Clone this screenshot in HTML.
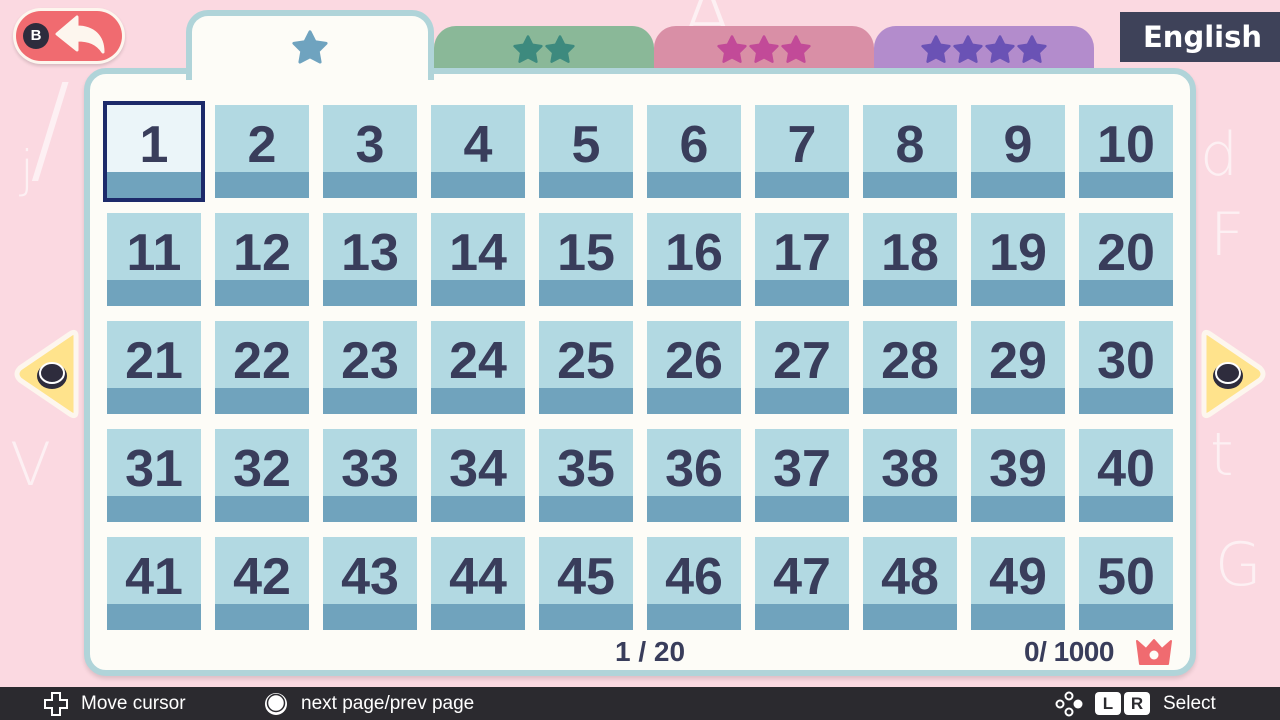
<!DOCTYPE html>
<html><head><meta charset="utf-8"><style>
*{margin:0;padding:0;box-sizing:border-box}
body{width:1280px;height:720px;overflow:hidden;background:#fbd9e1;position:relative;font-family:"Liberation Sans",sans-serif}
.abs{position:absolute}
.bgl{position:absolute;color:rgba(255,255,255,.6);font-family:"DejaVu Sans",sans-serif;font-weight:200}
.panel{left:84px;top:68px;width:1112px;height:608px;background:#fdfcf7;border:6px solid #b0d4d9;border-radius:22px;box-shadow:0 3px 4px rgba(0,0,0,.12)}
.tab{height:60px;border-radius:22px 22px 0 0;display:flex;justify-content:center;align-items:center;gap:2px}
.grid{left:107px;top:105px;display:grid;grid-template-columns:repeat(10,94px);grid-auto-rows:93px;column-gap:14px;row-gap:15px}
.c{background:#b2d9e2;position:relative;border-bottom:26px solid #70a3bd;color:#393d5b;font-weight:bold;font-size:52px;text-align:center;line-height:80px;letter-spacing:0;overflow:hidden}
.sel{background:#ebf5f9;box-shadow:0 0 0 4px #1d2a6a}
.bar{left:0;top:687px;width:1280px;height:33px;background:#2b2a2f;color:#fff;font-size:19px}
</style></head><body>
<div class="bgl" style="left:30px;top:60px;font-size:120px">/</div>
<div class="bgl" style="left:1200px;top:120px;font-size:60px">d</div>
<div class="bgl" style="left:1210px;top:200px;font-size:60px">F</div>
<div class="bgl" style="left:1215px;top:530px;font-size:60px">G</div>
<div class="bgl" style="left:20px;top:140px;font-size:50px">j</div>
<div class="bgl" style="left:10px;top:430px;font-size:60px">V</div>
<div class="bgl" style="left:1210px;top:420px;font-size:60px">t</div>
<div class="bgl" style="left:680px;top:-30px;font-size:80px">A</div>

<svg width="0" height="0" style="position:absolute"><defs><path id="s" d="M15 1.5l4.2 8.3 9.2 1.3-6.6 6.5 1.6 9.1-8.4-4.4-8.4 4.4 1.6-9.1-6.6-6.5 9.2-1.3z" stroke-width="2.5" stroke-linejoin="round"/></defs></svg>

<div class="abs" style="left:13px;top:8px;width:112px;height:56px;border-radius:28px;background:#fdf6ee;box-shadow:0 2px 3px rgba(0,0,0,.15)"></div>
<div class="abs" style="left:16px;top:11px;width:106px;height:50px;border-radius:25px;background:#f06b70"></div>
<div class="abs" style="left:23px;top:23px;width:26px;height:26px;border-radius:50%;background:#2e2c3d;color:#fff;font-size:15px;font-weight:bold;text-align:center;line-height:26px">B</div>
<svg class="abs" style="left:55px;top:14px" width="52" height="40" viewBox="0 0 52 40"><path d="M2 20 L22 3 L22 13 C38 13 48 22 48 38 C42 29 34 26 22 26 L22 36 Z" fill="#fdf6ee" stroke="#fdf6ee" stroke-width="3" stroke-linejoin="round"/></svg>

<div class="abs tab" style="left:434px;top:26px;width:220px;background:#8ab898;height:48px"><svg width="64" height="30" viewBox="0 0 64 30"><g fill="#3d8a7e" stroke="#3d8a7e"><use href="#s" x="1"/><use href="#s" x="33"/></g></svg></div>
<div class="abs tab" style="left:654px;top:26px;width:220px;background:#d98fa6;height:48px"><svg width="96" height="30" viewBox="0 0 96 30"><g fill="#c24a98" stroke="#c24a98"><use href="#s" x="1"/><use href="#s" x="33"/><use href="#s" x="65"/></g></svg></div>
<div class="abs tab" style="left:874px;top:26px;width:220px;background:#b38ccc;height:48px"><svg width="128" height="30" viewBox="0 0 128 30"><g fill="#6a52b5" stroke="#6a52b5"><use href="#s" x="1"/><use href="#s" x="33"/><use href="#s" x="65"/><use href="#s" x="97"/></g></svg></div>

<div class="abs panel"></div>
<div class="abs" style="left:186px;top:10px;width:248px;height:70px;background:#fdfcf7;border:6px solid #b0d4d9;border-bottom:none;border-radius:22px 22px 0 0"></div>
<div class="abs" style="left:192px;top:68px;width:236px;height:12px;background:#fdfcf7"></div>
<svg class="abs" style="left:292px;top:30px" width="36" height="36" viewBox="0 0 30 30"><g fill="#6fa3bf" stroke="#6fa3bf"><use href="#s"/></g></svg>

<div class="abs" style="left:1120px;top:12px;width:160px;height:50px;background:#3e4259;color:#fff;font-size:29px;font-weight:bold;line-height:50px;padding-left:23px;font-family:'DejaVu Sans',sans-serif">English</div>

<div class="abs grid">
<div class="c sel">1</div><div class="c">2</div><div class="c">3</div><div class="c">4</div><div class="c">5</div><div class="c">6</div><div class="c">7</div><div class="c">8</div><div class="c">9</div><div class="c">10</div>
<div class="c">11</div><div class="c">12</div><div class="c">13</div><div class="c">14</div><div class="c">15</div><div class="c">16</div><div class="c">17</div><div class="c">18</div><div class="c">19</div><div class="c">20</div>
<div class="c">21</div><div class="c">22</div><div class="c">23</div><div class="c">24</div><div class="c">25</div><div class="c">26</div><div class="c">27</div><div class="c">28</div><div class="c">29</div><div class="c">30</div>
<div class="c">31</div><div class="c">32</div><div class="c">33</div><div class="c">34</div><div class="c">35</div><div class="c">36</div><div class="c">37</div><div class="c">38</div><div class="c">39</div><div class="c">40</div>
<div class="c">41</div><div class="c">42</div><div class="c">43</div><div class="c">44</div><div class="c">45</div><div class="c">46</div><div class="c">47</div><div class="c">48</div><div class="c">49</div><div class="c">50</div>
</div>

<div class="abs" style="left:590px;top:636px;width:120px;text-align:center;font-size:28px;font-weight:bold;color:#393d5b">1 / 20</div>
<div class="abs" style="left:1024px;top:636px;font-size:28px;font-weight:bold;color:#393d5b;letter-spacing:-0.5px">0/ 1000</div>
<svg class="abs" style="left:1135px;top:638px" width="38" height="28" viewBox="0 0 38 28"><path d="M2 3 L11 11 L19 2 L27 11 L36 3 L33 26 L5 26 Z" fill="#f06b70" stroke="#f06b70" stroke-width="2" stroke-linejoin="round"/><circle cx="19" cy="17" r="4.5" fill="#fdfcf7"/></svg>

<svg class="abs" style="left:12px;top:328px" width="70" height="92" viewBox="0 0 70 92"><path d="M64 8 L64 84 Q64 90 58 86 L8 52 Q2 46 8 40 L58 6 Q64 2 64 8Z" fill="#ffe38c" stroke="#fdf6ee" stroke-width="5" stroke-linejoin="round"/><ellipse cx="40" cy="48" rx="15" ry="13" fill="#2e2c3d"/><ellipse cx="40" cy="45" rx="12" ry="10" fill="#2e2c3d" stroke="#fff" stroke-width="2"/></svg>
<svg class="abs" style="left:1198px;top:328px" width="70" height="92" viewBox="0 0 70 92"><path d="M6 8 L6 84 Q6 90 12 86 L62 52 Q68 46 62 40 L12 6 Q6 2 6 8Z" fill="#ffe38c" stroke="#fdf6ee" stroke-width="5" stroke-linejoin="round"/><ellipse cx="30" cy="48" rx="15" ry="13" fill="#2e2c3d"/><ellipse cx="30" cy="45" rx="12" ry="10" fill="#2e2c3d" stroke="#fff" stroke-width="2"/></svg>

<div class="abs bar">
<svg class="abs" style="left:44px;top:5px" width="24" height="24" viewBox="0 0 24 24"><path d="M8 1h8v7h7v8h-7v7H8v-7H1V8h7z" fill="none" stroke="#fff" stroke-width="2"/></svg>
<div class="abs" style="left:81px;top:6px">Move cursor</div>
<svg class="abs" style="left:263px;top:4px" width="26" height="26" viewBox="0 0 26 26"><circle cx="13" cy="13" r="11" fill="#fff"/><circle cx="13" cy="12" r="8.5" fill="#fff" stroke="#2b2a2f" stroke-width="1.5"/></svg>
<div class="abs" style="left:301px;top:6px">next page/prev page</div>
<svg class="abs" style="left:1055px;top:4px" width="28" height="26" viewBox="0 0 28 26"><g fill="none" stroke="#fff" stroke-width="2"><circle cx="14" cy="5" r="3.5"/><circle cx="5" cy="13" r="3.5"/><circle cx="14" cy="21" r="3.5"/></g><circle cx="23" cy="13" r="4.5" fill="#fff"/></svg>
<div class="abs" style="left:1095px;top:5px;width:26px;height:23px;background:#fff;border-radius:4px;color:#2b2a2f;font-weight:bold;font-size:17px;text-align:center;line-height:23px">L</div>
<div class="abs" style="left:1124px;top:5px;width:26px;height:23px;background:#fff;border-radius:4px;color:#2b2a2f;font-weight:bold;font-size:17px;text-align:center;line-height:23px">R</div>
<div class="abs" style="left:1163px;top:6px">Select</div>
</div>
</body></html>
